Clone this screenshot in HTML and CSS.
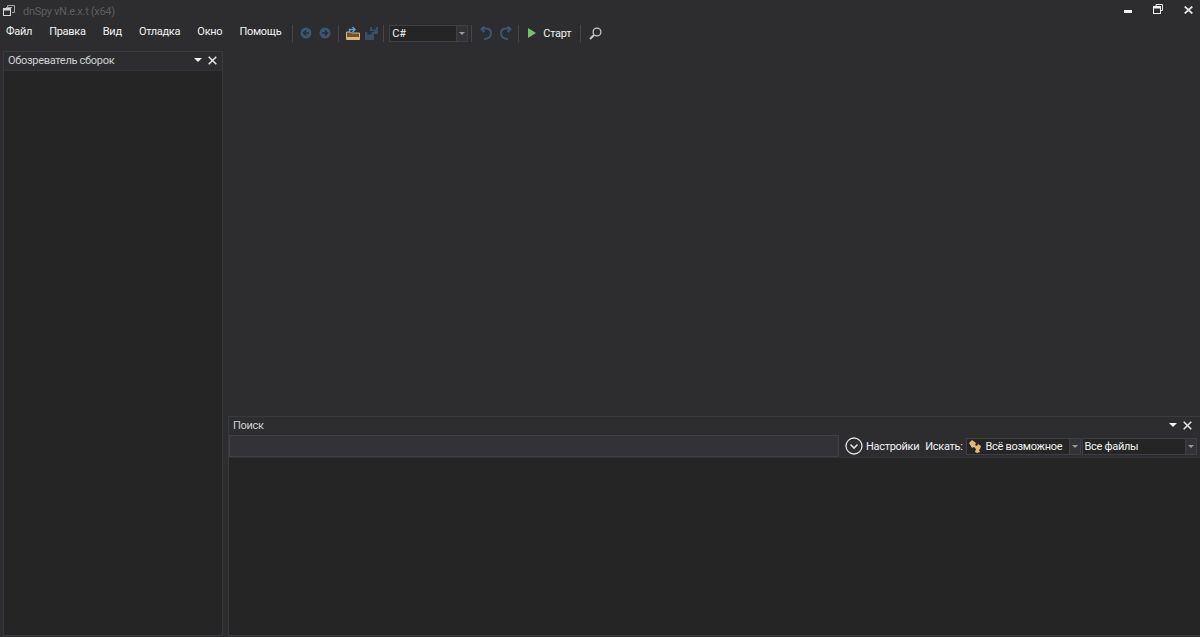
FILE: index.html
```html
<!DOCTYPE html>
<html lang="ru">
<head>
    <meta charset="UTF-8" />
    <title>dnSpy vN.e.x.t (x64)</title>
    <link rel="stylesheet" href="styles.css">
</head>
<body>

<div class="app">

    <!-- title bar -->
    <div class="titlebar">
        <svg class="app-icon" width="12" height="11" viewBox="0 0 12 11"><path d="M4.500 2V.5h7v7H9" fill="none" stroke="#a8a8a8"/><rect x="3" y="2" width="6" height="1" fill="#a8a8a8"/><rect x=".5" y="3.500" width="7" height="7" fill="#2d2d30" stroke="#d8d8d8"/><rect x="1" y="4" width="6" height="1.500" fill="#d8d8d8"/></svg>
        <span class="app-title">dnSpy vN.e.x.t (x64)</span>
        <div class="win-buttons">
            <svg class="win-min" width="8" height="3" viewBox="0 0 8 3"><rect width="8" height="3" fill="#f1f1f1"/></svg>
            <svg class="win-restore" width="10" height="10" viewBox="0 0 10 10"><path d="M3 2.500V.5h6.500v6H8" fill="none" stroke="#e8e8e8"/><rect x=".5" y="2.500" width="7" height="7" fill="none" stroke="#f1f1f1"/><rect x="1" y="3" width="6" height="1.500" fill="#f1f1f1"/></svg>
            <svg class="win-close" width="9" height="8" viewBox="0 0 9 8"><path d="M.7.500l7.600 7M8.300.5L.7 7.500" stroke="#e8e8e8" stroke-width="1.700"/></svg>
        </div>
    </div>

    <!-- menu + toolbar -->
    <div class="toolbar">
        <div class="menu">
            <span>Файл</span>
            <span>Правка</span>
            <span>Вид</span>
            <span>Отладка</span>
            <span>Окно</span>
            <span>Помощь</span>
        </div>
        <div class="sep sep-menu"></div>
        <svg class="tool back" width="12" height="12" viewBox="0 0 12 12"><circle cx="6" cy="6" r="5.500" fill="#3b566f"/><path d="M9 6H4M6 3.500L3.500 6 6 8.500" fill="none" stroke="#2d2d30" stroke-width="1.500"/></svg>
        <svg class="tool fwd" width="12" height="12" viewBox="0 0 12 12"><circle cx="6" cy="6" r="5.500" fill="#3b566f"/><path d="M3 6h5M6 3.500L8.500 6 6 8.500" fill="none" stroke="#2d2d30" stroke-width="1.500"/></svg>
        <div class="sep sep-nav"></div>
        <svg class="tool open" width="14" height="14" viewBox="0 0 14 14"><path d="M.5 6h4l1 1h8v6.500H.5z" fill="#6b5530" stroke="#dcb67a"/><path d="M1 11h12v2H1z" fill="#dcb67a"/><path d="M3.500 6V3.500h5M6.500 1L9 3.500 6.500 6" fill="none" stroke="#5a9bd1" stroke-width="1.500"/></svg>
        <svg class="tool save" width="13" height="13" viewBox="0 0 13 13"><path d="M5 0h8v7H9V4H5z" fill="#3b4f62"/><path d="M7 0h4v2.500H7z" fill="#2d2d30"/><path d="M0 5h9v8H0z" fill="#3b4f62"/><path d="M2.500 5h4v2.500h-4z" fill="#2d2d30"/></svg>
        <div class="sep sep-file"></div>
        <div class="combo lang">
            <span class="combo-text">C#</span>
            <span class="combo-arrow"></span>
        </div>
        <div class="sep sep-lang"></div>
        <svg class="tool undo" width="12" height="14" viewBox="0 0 12 14"><path d="M4 13c4.500 0 7-2.500 7-6S8.500 2.500 5.500 2.500H2M4.500.5l-3 2.500 3 3" fill="none" stroke="#3b566f" stroke-width="2"/></svg>
        <svg class="tool redo" width="12" height="14" viewBox="0 0 12 14"><path d="M8 13C3.500 13 1 10.500 1 7s2.500-4.500 5.500-4.500H10M7.500.5l3 2.500-3 3" fill="none" stroke="#3b566f" stroke-width="2"/></svg>
        <div class="sep sep-edit"></div>
        <svg class="tool play" width="8" height="10" viewBox="0 0 8 10"><path d="M0 0l8 5-8 5z" fill="#74c26f"/></svg>
        <span class="start">Старт</span>
        <div class="sep sep-run"></div>
        <svg class="tool find" width="13" height="13" viewBox="0 0 13 13"><circle cx="8" cy="5" r="3.900" fill="none" stroke="#c8c8c8" stroke-width="1.300"/><path d="M5 8l-4 4" stroke="#c8c8c8" stroke-width="2"/></svg>
    </div>

    <!-- panels -->
    <div class="workspace">
        <div class="panel left-panel">
            <div class="panel-title">
                <span>Обозреватель сборок</span>
                <div class="grip"></div>
                <span class="pin"></span>
                <svg class="close" width="9" height="9" viewBox="0 0 9 9"><path d="M.7.700l7.600 7.600M8.300.7L.7 8.300" stroke="#e8e8e8" stroke-width="1.500"/></svg>
            </div>
            <div class="panel-body"></div>
        </div>

        <div class="right-area">
            <div class="document-area"></div>
            <div class="panel search-panel">
                <div class="panel-title">
                    <span>Поиск</span>
                    <div class="grip"></div>
                    <span class="pin"></span>
                    <svg class="close" width="9" height="9" viewBox="0 0 9 9"><path d="M.7.700l7.600 7.600M8.300.7L.7 8.300" stroke="#e8e8e8" stroke-width="1.500"/></svg>
                </div>
                <div class="search-row">
                    <div class="search-input"></div>
                    <svg class="options-icon" width="18" height="18" viewBox="0 0 18 18"><circle cx="9" cy="9" r="8" fill="none" stroke="#e0e0e0" stroke-width="1.300"/><path d="M5.500 7.500L9 11l3.500-3.500" fill="none" stroke="#e0e0e0" stroke-width="1.600"/></svg>
                    <span class="options-label">Настройки</span>
                    <span class="find-label">Искать:</span>
                    <div class="combo kind">
                        <svg class="kind-icon" width="13" height="13" viewBox="0 0 13 13"><path d="M0 3l3-3 4 3-1 2 2 1 1-2 3 2-1 3-1 1 1 2-3 1-2-1 1-3-2-2-2 1z" fill="#e4b878"/></svg>
                        <span class="combo-text">Всё возможное</span>
                        <span class="combo-arrow"></span>
                    </div>
                    <div class="combo files">
                        <span class="combo-text">Все файлы</span>
                        <span class="combo-arrow"></span>
                    </div>
                </div>
                <div class="panel-body"></div>
            </div>
        </div>
    </div>
</div>

</body>
</html>
```

FILE: styles.css
```css
* {
    box-sizing: border-box;
}

html, body {
    height: 100%;
}

body {
    margin: 0;
    background: #2d2d30;
    color: #f1f1f1;
    font-family: Roboto, "Noto Sans", sans-serif;
    font-size: 11px;
    letter-spacing: -0.3px;
    overflow: hidden;
}

.app {
    display: flex;
    flex-direction: column;
    height: 637px;
}

/* title bar */
.titlebar {
    display: flex;
    align-items: center;
    height: 20px;
    padding-left: 3px;
}

.app-icon {
    align-self: flex-start;
    margin-top: 5px;
}

.app-title {
    margin-left: 8px;
    margin-top: 3px;
    color: #5e5e5e;
}

.win-buttons {
    display: flex;
    align-items: flex-start;
    align-self: flex-start;
    gap: 21px;
    margin-left: auto;
    margin-right: 7px;
    margin-top: 4px;
}

.win-min {
    margin-top: 6px;
}

.win-close {
    margin-top: 2px;
}

/* menu + toolbar */
.toolbar {
    display: flex;
    align-items: center;
    height: 24px;
    margin-top: 1px;
}

.menu {
    display: flex;
    gap: 17.2px;
    margin-top: -4px;
    padding-left: 6px;
}

.sep {
    flex: none;
    width: 1px;
    height: 17px;
    background: #46464a;
}

.sep-menu {
    margin: 0 7px 0 11px;
}

.sep-nav {
    margin: 0 7px;
}

.sep-file {
    margin: 0 5px;
}

.sep-lang {
    margin: 0 8px 0 3px;
}

.sep-edit {
    margin: 0 9px 0 6px;
}

.sep-run {
    margin: 0 8px 0 9px;
}

.tool {
    flex: none;
}

.fwd {
    margin-left: 7px;
}

.save {
    margin-left: 5px;
}

.redo {
    margin-left: 8px;
}

.start {
    margin-left: 7px;
}

.combo {
    display: flex;
    align-items: center;
    border: 1px solid #3f3f46;
    background: #252526;
}

.combo-text {
    flex: 1;
    padding-left: 2px;
    white-space: nowrap;
}

.combo-arrow {
    position: relative;
    flex: none;
    width: 11px;
    height: 100%;
    background: #333337;
    border-left: 1px solid #3f3f46;
}

.combo-arrow::after {
    content: "";
    position: absolute;
    top: 6px;
    left: 2px;
    border: 3px solid transparent;
    border-top: 3px solid #999;
}

.lang {
    width: 79px;
    height: 17px;
}

/* panels */
.workspace {
    display: flex;
    flex: 1;
    gap: 5px;
    padding: 6px 0 1px 3px;
    min-height: 0;
}

.panel {
    display: flex;
    flex-direction: column;
    border: 1px solid #3a3a3e;
    background: #2d2d30;
}

.left-panel {
    width: 220px;
}

.panel-title {
    display: flex;
    align-items: center;
    flex: none;
    height: 18px;
    padding: 0 5px 2px 4px;
    color: #d0d0d0;
}

.grip {
    flex: 1;
    height: 5px;
    margin: 0 5px 0 9px;
    background-image: radial-gradient(#46464a 0.6px, transparent 0.7px);
    background-size: 2px 2px;
}

.pin {
    flex: none;
    width: 0;
    height: 0;
    margin-top: 4px;
    margin-right: 6px;
    border: 4px solid transparent;
    border-top: 4px solid #f1f1f1;
}

.panel-body {
    flex: 1;
    background: #252526;
    border-top: 1px solid #333337;
}

.right-area {
    display: flex;
    flex-direction: column;
    flex: 1;
    min-width: 0;
}

.document-area {
    flex: 1;
}

.search-panel {
    height: 220px;
    border-right: 0;
}

.search-panel .panel-title {
    padding-right: 8px;
}

.search-row {
    display: flex;
    align-items: center;
    flex: none;
    height: 22px;
}

.search-input {
    width: 610px;
    height: 100%;
    border: 1px solid #3f3f46;
    background: #333337;
}

.options-icon {
    margin-left: 6px;
}

.options-label {
    margin-left: 3px;
}

.find-label {
    margin-left: 6px;
}

.kind {
    width: 115px;
    height: 17px;
    margin-left: 3px;
}

.kind-icon {
    flex: none;
    margin-left: 2px;
}

.kind .combo-text {
    padding-left: 4px;
}

.files {
    flex: 1;
    height: 17px;
    margin-left: 1px;
    margin-right: 3px;
}
```
